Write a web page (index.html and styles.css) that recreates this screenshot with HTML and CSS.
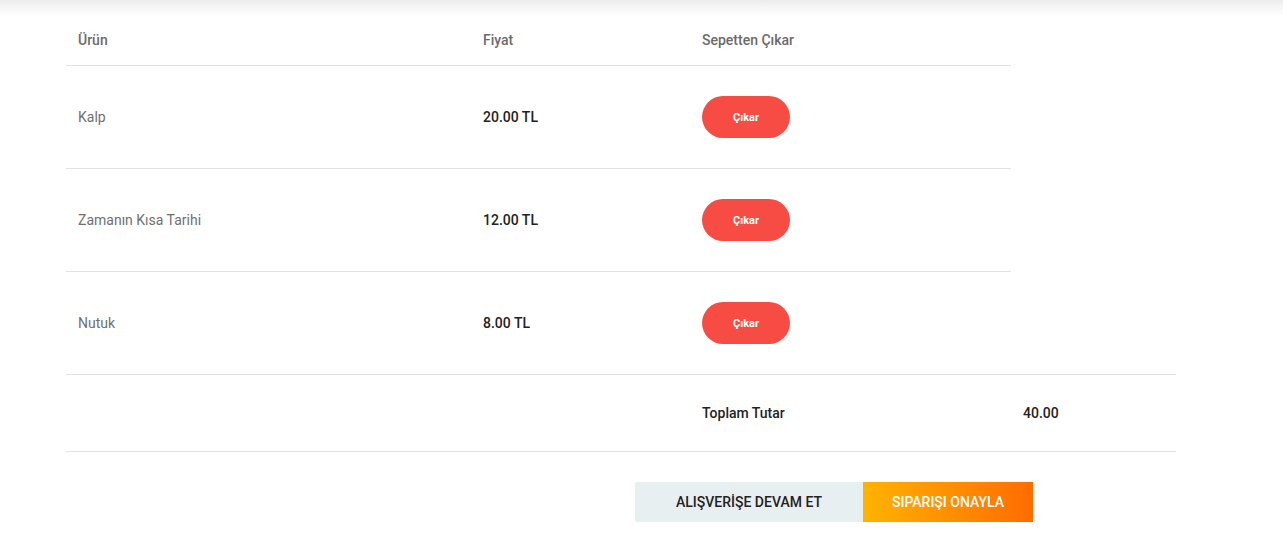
FILE: index.html
```html
<!DOCTYPE html>
<html lang="tr">
<head>
<meta charset="utf-8">
<title>Sepet</title>
<link rel="stylesheet" href="styles.css">
</head>
<body>
<div class="topshade"></div>
<main class="cart">
  <table class="cart-table">
    <thead>
      <tr>
        <th class="c1">Ürün</th>
        <th class="c2">Fiyat</th>
        <th class="c3">Sepetten Çıkar</th>
      </tr>
    </thead>
    <tbody>
      <tr>
        <td class="name">Kalp</td>
        <td class="price">20.00 TL</td>
        <td><button class="remove">Çıkar</button></td>
      </tr>
      <tr>
        <td class="name">Zamanın Kısa Tarihi</td>
        <td class="price">12.00 TL</td>
        <td><button class="remove">Çıkar</button></td>
      </tr>
      <tr>
        <td class="name">Nutuk</td>
        <td class="price">8.00 TL</td>
        <td><button class="remove">Çıkar</button></td>
      </tr>
    </tbody>
  </table>
  <table class="total-table">
    <tr>
      <td class="t1"></td>
      <td class="t2"></td>
      <td class="t3 total-label">Toplam Tutar</td>
      <td class="t4 total-value">40.00</td>
    </tr>
  </table>
  <div class="actions">
    <button class="btn-continue">ALIŞVERİŞE DEVAM ET</button>
    <button class="btn-confirm">SIPARIŞI ONAYLA</button>
  </div>
</main>
</body>
</html>
```

FILE: styles.css
```css
html, body {
  margin: 0;
  padding: 0;
  background: #fff;
  font-family: Roboto, "Liberation Sans", sans-serif;
  font-size: 14px;
}
.topshade {
  height: 18px;
  background: linear-gradient(to bottom, #ececec 0%, #f6f6f6 45%, #fdfdfd 80%, #ffffff 100%);
}
.cart {
  padding-left: 66px;
}
table {
  border-collapse: collapse;
}
.cart-table {
  width: 945px;
}
.cart-table th {
  height: 44px;
  padding: 0 12px 3px;
  text-align: left;
  font-weight: 500;
  color: #6b6b6b;
  font-size: 14px;
  border-bottom: 1px solid #e2e2e2;
  vertical-align: middle;
}
.c1 { width: 381px; }
.c2 { width: 195px; }
.cart-table td {
  height: 102px;
  padding: 0 12px;
  vertical-align: middle;
}
.cart-table tbody tr + tr td {
  border-top: 1px solid #e2e2e2;
}
.name {
  color: #6f6f6f;
}
.price {
  color: #222;
  font-weight: 500;
}
.remove {
  width: 88px;
  height: 42px;
  border: none;
  border-radius: 21px;
  background: #f64c43;
  color: #fff;
  font-family: Roboto, "Liberation Sans", sans-serif;
  font-weight: 700;
  font-size: 11px;
  padding: 0;
  display: block;
}
.total-table {
  width: 1110px;
  border-top: 1px solid #e2e2e2;
  border-bottom: 1px solid #e2e2e2;
}
.total-table td {
  height: 76px;
  padding: 0 12px;
  vertical-align: middle;
  color: #222;
  font-weight: 500;
}
.t1 { width: 381px; }
.t2 { width: 195px; }
.t3 { width: 297px; }
.actions {
  display: flex;
  margin-top: 30px;
  padding-left: 569px;
}
.actions button {
  height: 40px;
  border: none;
  font-family: Roboto, "Liberation Sans", sans-serif;
  font-weight: 500;
  font-size: 14px;
  padding: 0;
}
.btn-continue {
  width: 228px;
  background: #e8eff1;
  color: #222;
  border-radius: 2px 0 0 2px;
}
.btn-confirm {
  width: 170px;
  background: linear-gradient(to right, #ffb300, #ff6c00);
  color: #fff;
}
```
